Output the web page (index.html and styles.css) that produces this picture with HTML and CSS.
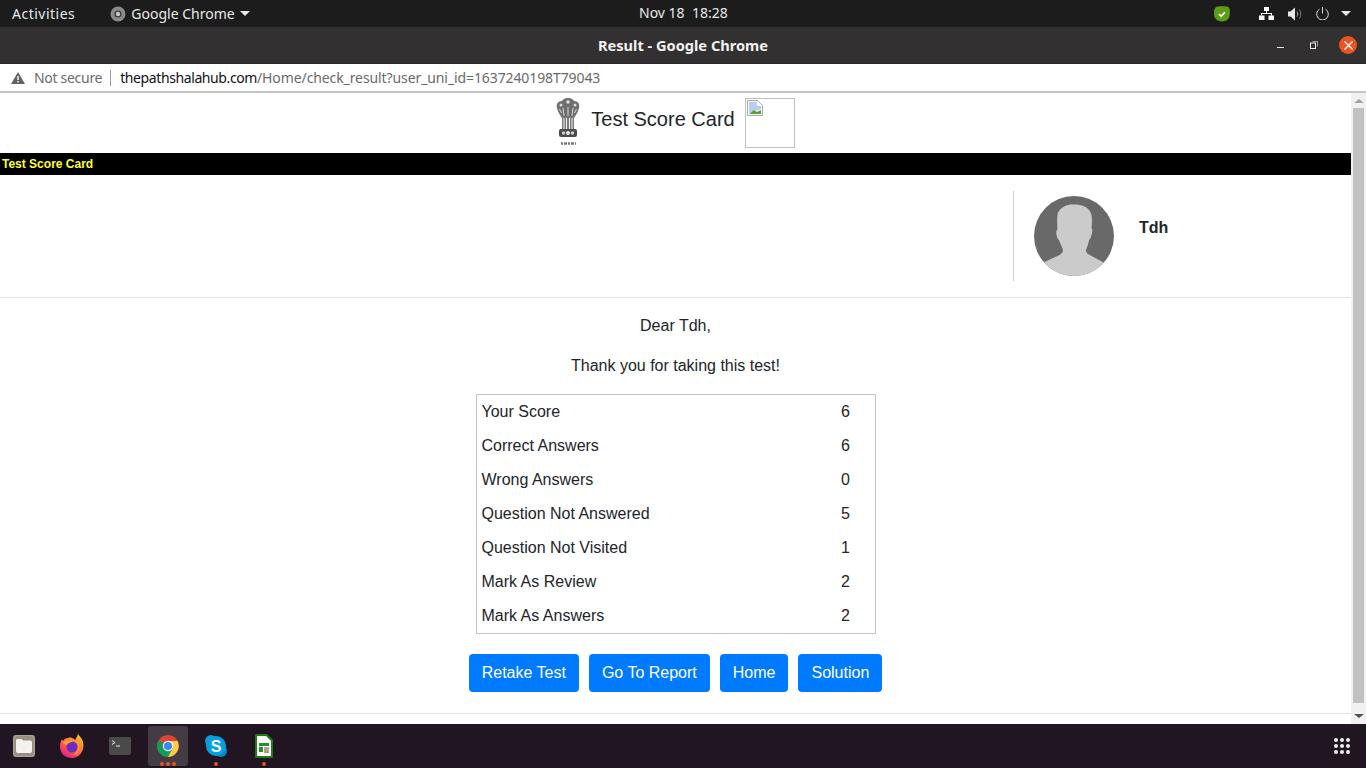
FILE: index.html
```html
<!DOCTYPE html>
<html lang="en">
<head>
    <meta charset="UTF-8">
    <meta name="viewport" content="width=device-width, initial-scale=1.0">
    <title>Result - Google Chrome</title>
    <link rel="stylesheet" href="styles.css">
</head>
<body>

    <div class="topbar">
        <div class="topbar-left">
            <span class="activities">Activities</span>
            <span class="app-menu">
                <svg class="app-icon" width="16" height="16" viewBox="0 0 16 16"><circle cx="8" cy="8" r="7.500" fill="#8b8b8b"/><circle cx="8" cy="8" r="3.600" fill="#3a3a3a"/><circle cx="8" cy="8" r="2.200" fill="#c8c8c8"/></svg>
                Google Chrome
                <span class="caret"></span>
            </span>
        </div>
        <div class="clock">Nov 18&nbsp; 18:28</div>
        <div class="tray">
            <svg class="tray-shield" width="16" height="16" viewBox="0 0 16 16"><path d="M3.500.500C6 0 11 0 13 .500c2 .5 2.700 2 2.800 4 .2 3 .1 6-1.300 8-1.300 2-4.500 3.300-7.200 3-2.500-.3-5-1.500-6.300-3.500C-.2 10 0 6.500.2 4.500.4 2.500 1.500 1 3.500.500z" fill="#5a9e16"/><path d="M5 8.200l2.200 2.100L11 6.200" fill="none" stroke="#fff" stroke-width="1.700"/></svg>
            <svg class="tray-net" width="15" height="13" viewBox="0 0 15 13" fill="#fff"><rect x="5" y="0" width="5" height="4"/><rect x="0" y="8.500" width="5.500" height="4.500"/><rect x="9.500" y="8.500" width="5.500" height="4.500"/><path d="M7 4h1v2h5v2.500h-1V7H3v1.500H2V6h5z"/></svg>
            <svg class="tray-vol" width="14" height="14" viewBox="0 0 14 14"><path d="M0 4.500h2.500L7 .5v13L2.500 9.500H0z" fill="#e8e8e8"/><path d="M9 4.500c1 1.500 1 3.500 0 5" fill="none" stroke="#aaa" stroke-width="1"/><path d="M11.500 2.500c1.700 2.700 1.700 6.300 0 9" fill="none" stroke="#777" stroke-width="1"/></svg>
            <svg class="tray-power" width="13" height="13" viewBox="0 0 13 13"><path d="M3.500 2.200a5.800 5.800 0 1 0 6 0" fill="none" stroke="#ddd" stroke-width="1"/><path d="M6.500 0v6.500" stroke="#ddd" stroke-width="1"/></svg>
            <span class="caret tray-caret"></span>
        </div>
    </div>

    <div class="titlebar">
        <span class="window-title">Result - Google Chrome</span>
        <div class="window-buttons">
            <span class="btn-min"></span>
            <svg class="btn-max" width="8" height="8" viewBox="0 0 8 8"><rect x=".5" y="2" width="5" height="5.500" fill="none" stroke="#f0f0f0" stroke-width="1"/><path d="M2.500.500h5V5.500" fill="none" stroke="#a0a0a0" stroke-width="1"/></svg>
            <span class="btn-close">
                <svg width="9" height="9" viewBox="0 0 9 9"><path d="M.5.500l8 8M8.500.500l-8 8" stroke="#fff" stroke-width="1.200"/></svg>
            </span>
        </div>
    </div>

    <div class="urlbar">
        <svg class="warn-icon" width="14" height="12" viewBox="0 0 14 12"><path d="M7 0l7 12H0z" fill="#5f6368"/><rect x="6.300" y="4" width="1.400" height="4" fill="#fff"/><rect x="6.300" y="9" width="1.400" height="1.500" fill="#fff"/></svg>
        <span class="not-secure">Not secure</span>
        <span class="url-sep"></span>
        <span class="url"><span class="url-host">thepathshalahub.com</span>/Home/check_result?user_uni_id=1637240198T79043</span>
    </div>

    <div class="viewport">
        <div class="page">
            <div class="brand">
                <svg class="emblem" width="24" height="50" viewBox="0 0 24 50">
                    <defs><filter id="soft"><feGaussianBlur stdDeviation="0.450"/></filter></defs>
                    <g filter="url(#soft)">
                        <path d="M1 10C0 6 2 3 6 3c1-2 3-3 6-3s5 1 6 3c4 0 6 3 5 7-1 4-3 7-5 10H6C4 17 2 14 1 10z" fill="#6e6e6e"/>
                        <circle cx="12" cy="4" r="1.800" fill="#dcdcdc"/>
                        <circle cx="5" cy="7" r="1.500" fill="#dcdcdc"/>
                        <circle cx="19" cy="7" r="1.500" fill="#dcdcdc"/>
                        <path d="M7 10l1 8M12 9v9M17 10l-1 8M3.500 11l2 4M20.500 11l-2 4" stroke="#d8d8d8" stroke-width="1"/>
                        <path d="M6 19h12v12H6z" fill="#7c7c7c"/>
                        <path d="M8 20v11M10.500 20v11M13.500 20v11M16 20v11" stroke="#ececec" stroke-width="1"/>
                        <rect x="3" y="31" width="18" height="8" rx="2" fill="#4c4c4c"/>
                        <circle cx="7.500" cy="35" r="1.700" fill="#d0d0d0"/>
                        <circle cx="12" cy="35" r="2.100" fill="#e4e4e4"/>
                        <circle cx="16.500" cy="35" r="1.700" fill="#d0d0d0"/>
                        <path d="M5 45.500h15" stroke="#777" stroke-width="2.500" stroke-dasharray="2 1 3 1"/>
                    </g>
                </svg>
                <h1 class="brand-title">Test Score Card</h1>
                <span class="broken-img">
                    <svg width="16" height="16" viewBox="0 0 16 16"><path d="M.5.500h10l5 5v10H.5z" fill="#fff" stroke="#a9a9a9"/><path d="M2 2h8v4h4v3l-4 2-2-1-6 3z" fill="#b7cdf2"/><path d="M2 14l5-4 3 2 4-2v4z" fill="#57a02c"/></svg>
                </span>
            </div>

            <div class="black-strip">Test Score Card</div>

            <div class="profile-row">
                <div class="profile">
                    <svg class="avatar" width="80" height="80" viewBox="0 0 80 80">
                        <defs><clipPath id="avatarClip"><circle cx="40" cy="40" r="40"/></clipPath></defs>
                        <circle cx="40" cy="40" r="40" fill="#696969"/>
                        <path clip-path="url(#avatarClip)" d="M24.500 16C27 11 33 8.500 38 8.500 46 8 54 10 57 17c1.500 5 1 10 .5 15 1 1 1 4 0 7-.5 3-2 4.500-2.500 5-.5 4-2 7-3 10 0 2 1 3.500 3 4.500l14.500 8L80 82H0l10.500-16 15-7c1.500-1 3.500-2.500 3.500-5-1-3-3-7-4-10-1.500-.5-2-3-2.500-5-.5-3 0-5 1-6-.5-5-.5-12 .5-17z" fill="#cbcbcb"/>
                    </svg>
                    <span class="profile-name">Tdh</span>
                </div>
            </div>

            <div class="result">
                <p class="dear">Dear Tdh,</p>
                <p class="thanks">Thank you for taking this test!</p>
                <table class="score-table">
                    <tr><td>Your Score</td><td>6</td></tr>
                    <tr><td>Correct Answers</td><td>6</td></tr>
                    <tr><td>Wrong Answers</td><td>0</td></tr>
                    <tr><td>Question Not Answered</td><td>5</td></tr>
                    <tr><td>Question Not Visited</td><td>1</td></tr>
                    <tr><td>Mark As Review</td><td>2</td></tr>
                    <tr><td>Mark As Answers</td><td>2</td></tr>
                </table>
                <div class="actions">
                    <a class="action" href="#">Retake Test</a>
                    <a class="action" href="#">Go To Report</a>
                    <a class="action" href="#">Home</a>
                    <a class="action" href="#">Solution</a>
                </div>
            </div>
            <div class="page-rule"></div>
        </div>
        <div class="scrollbar">
            <span class="arrow-up"></span>
            <span class="thumb"></span>
            <span class="arrow-down"></span>
        </div>
    </div>

    <div class="dock">
        <div class="dock-items">
            <span class="dock-item">
                <svg width="24" height="24" viewBox="0 0 24 24"><rect x="1" y="1" width="22" height="22" rx="3" fill="#979083"/><rect x="1.500" y="1.500" width="21" height="21" rx="3" fill="none" stroke="#aaa598"/><path d="M4 6.500a1.500 1.500 0 0 1 1.500-1.500h4l1.500 1.500h7.500A1.500 1.500 0 0 1 20 8v9a2 2 0 0 1-2 2H6a2 2 0 0 1-2-2z" fill="#f4f2ee"/></svg>
            </span>
            <span class="dock-item">
                <svg width="24" height="26" viewBox="0 0 24 26">
                    <defs><linearGradient id="foxGrad" x1="0.800" y1="0" x2="0.200" y2="1"><stop offset="0" stop-color="#ffc926"/><stop offset="0.500" stop-color="#ff7139"/><stop offset="1" stop-color="#e31587"/></linearGradient></defs>
                    <path d="M18 0c0 3 4 4 5 9 2 8-3 16-11 16S0 20 0 13c0-3 1-5 2-7l1 2c1-2 3-3 5-3 3-1 5 0 7 2 1-2 3-4 3-7z" fill="url(#foxGrad)"/>
                    <circle cx="12" cy="14" r="5.500" fill="#6c2bc4"/>
                    <path d="M3 9c3-2 7-2 10 0-3 0-5 1-6 3-2 0-3-1-4-3z" fill="#ff9b2e"/>
                    <path d="M16 7c3 2 4 6 3 10-1 3-3 5-6 5 3-2 5-4 5-8 0-3-1-5-2-7z" fill="#ff9b2e"/>
                </svg>
            </span>
            <span class="dock-item">
                <svg width="22" height="18" viewBox="0 0 22 18"><rect width="22" height="18" rx="2" fill="#4a4a4a"/><path d="M3 3.500l3 2-3 2" fill="none" stroke="#eee" stroke-width="1"/><path d="M7 9h4" stroke="#eee" stroke-width="1"/></svg>
            </span>
            <span class="dock-item dock-active">
                <svg width="24" height="24" viewBox="0 0 24 24">
                    <circle cx="12" cy="12" r="11" fill="#db4437"/>
                    <path d="M12 12L2.500 6.500A11 11 0 0 0 12 23l5.500-9.500z" fill="#0f9d58"/>
                    <path d="M12 7h9.500A11 11 0 0 1 12 23l5-9z" fill="#ffcd40"/>
                    <circle cx="12" cy="12" r="5.200" fill="#fff"/>
                    <circle cx="12" cy="12" r="4.100" fill="#4285f4"/>
                </svg>
                <span class="dots"><i></i><i></i><i></i></span>
            </span>
            <span class="dock-item">
                <svg width="24" height="24" viewBox="0 0 24 24"><circle cx="7" cy="7" r="6" fill="#0a9bd8"/><circle cx="17" cy="17" r="6" fill="#0a86c8"/><circle cx="12" cy="12" r="10" fill="#03a1e0"/><text x="12" y="17.500" class="skype-s">S</text></svg>
                <span class="dots"><i></i></span>
            </span>
            <span class="dock-item">
                <svg width="18" height="24" viewBox="0 0 18 24"><path d="M1 0h11l6 6v17a1 1 0 0 1-1 1H1a1 1 0 0 1-1-1V1a1 1 0 0 1 1-1z" fill="#1d7d14"/><path d="M2 2h9l5 5v15H2z" fill="#fff"/><path d="M4 9h10v3H4zM4 13h4v5H4z" fill="#2a8f22"/><rect x="9" y="13" width="5" height="6" fill="#a9a9a9"/><path d="M10.500 19v-4M12.500 19v-2" stroke="#e07b20" stroke-width="1"/></svg>
                <span class="dots"><i></i></span>
            </span>
        </div>
        <span class="app-grid">
            <i></i><i></i><i></i><i></i><i></i><i></i><i></i><i></i><i></i>
        </span>
    </div>

</body>
</html>
```

FILE: styles.css
```css
* {
    box-sizing: border-box;
}

html, body {
    height: 100%;
}

body {
    margin: 0;
    height: 768px;
    overflow: hidden;
    display: flex;
    flex-direction: column;
    font-family: 'Liberation Sans', Arial, sans-serif;
    color: #212529;
    background-color: #ffffff;
}

/* ubuntu desktop chrome */
.topbar {
    height: 27px;
    flex: none;
    display: flex;
    align-items: center;
    justify-content: space-between;
    position: relative;
    padding: 0 15px 0 12px;
    background-color: #1c1c1c;
    color: #e8e8e8;
    font-family: 'Noto Sans', sans-serif;
    font-size: 14px;
}

.topbar-left {
    display: flex;
    align-items: center;
}

.activities {
    letter-spacing: 0.5px;
}

.app-menu {
    display: flex;
    align-items: center;
    margin-left: 35px;
}

.app-icon {
    margin-right: 5px;
}

.caret {
    display: inline-block;
    margin-left: 5px;
    border-left: 5px solid transparent;
    border-right: 5px solid transparent;
    border-top: 5px solid #e8e8e8;
}

.clock {
    position: absolute;
    left: 639px;
    top: 3px;
    font-size: 14px;
}

.tray {
    display: flex;
    align-items: center;
}

.tray-net {
    margin-left: 29px;
}

.tray-vol {
    margin-left: 14px;
}

.tray-power {
    margin-left: 14px;
}

.tray-caret {
    margin-left: 12px;
}

.titlebar {
    height: 37px;
    flex: none;
    display: flex;
    align-items: center;
    justify-content: center;
    position: relative;
    background-color: #323030;
    border-bottom: 1px solid #2a2a2a;
}

.window-title {
    color: #f2f2f2;
    font-family: 'Noto Sans', sans-serif;
    font-weight: 700;
    font-size: 14.600px;
}

.window-buttons {
    position: absolute;
    right: 9px;
    top: 9px;
    display: flex;
    align-items: center;
}

.btn-min {
    width: 7px;
    height: 1px;
    margin-top: 4px;
    background-color: #e8e8e8;
}

.btn-max {
    margin-left: 26px;
    margin-top: -1px;
}

.btn-close {
    width: 18px;
    height: 18px;
    margin-left: 21px;
    display: flex;
    align-items: center;
    justify-content: center;
    border-radius: 50%;
    background-color: #e95420;
}

.urlbar {
    height: 29px;
    flex: none;
    display: flex;
    align-items: center;
    padding-left: 11px;
    background-color: #ffffff;
    border-bottom: 2px solid #c4c4c4;
    font-family: 'Noto Sans', sans-serif;
    font-size: 14px;
    color: #6a6a6a;
}

.not-secure {
    margin-left: 9px;
    letter-spacing: -0.3px;
}

.url-sep {
    width: 1px;
    height: 16px;
    margin: 0 9px 0 8px;
    background-color: #9a9a9a;
}

.url {
    letter-spacing: -0.1px;
}

.url-host {
    color: #111111;
    letter-spacing: -0.4px;
}

/* page area */
.viewport {
    flex: 1;
    min-height: 0;
    display: flex;
}

.page {
    flex: 1;
    min-width: 0;
}

.brand {
    height: 60px;
    display: flex;
    align-items: center;
    justify-content: center;
}

.emblem {
    margin-right: 11px;
}

.brand-title {
    margin: 0 10px 0 0;
    font-size: 20px;
    font-weight: 400;
    position: relative;
    top: -4px;
}

.broken-img {
    width: 50px;
    height: 50px;
    display: block;
    padding: 1px 0 0 1px;
    border: 1px solid #c0c0c0;
}

.black-strip {
    height: 22px;
    line-height: 22px;
    padding-left: 2px;
    background-color: #000000;
    color: #ffff33;
    font-size: 12px;
    font-weight: 700;
}

.profile-row {
    height: 123px;
    padding-top: 16px;
    border-bottom: 1px solid #e4e4e4;
}

.profile {
    width: 338px;
    height: 90px;
    margin-left: auto;
    display: flex;
    padding: 5px 0 0 20px;
    border-left: 1px solid #cccccc;
}

.profile-name {
    margin: 23px 0 0 25px;
    font-size: 16px;
    font-weight: 700;
}

.result {
    display: flex;
    flex-direction: column;
    align-items: center;
    font-size: 16px;
}

.dear {
    margin: 18px 0 0;
    line-height: 20px;
}

.thanks {
    margin: 20px 0 0;
    line-height: 20px;
}

.score-table {
    width: 400px;
    height: 240px;
    margin-top: 18px;
    padding: 0;
    border: 1px solid #c4c4c4;
    border-collapse: separate;
    border-spacing: 0;
}

.score-table td {
    height: 34px;
    padding: 0 0 0 5px;
}

.score-table td:last-child {
    width: 33.500px;
    padding: 0;
}

.actions {
    display: flex;
    gap: 10px;
    margin-top: 20px;
}

.action {
    height: 38px;
    line-height: 38px;
    padding: 0 13px;
    border-radius: 4px;
    background-color: #007bff;
    color: #ffffff;
    text-decoration: none;
}

.page-rule {
    height: 1px;
    margin-top: 21px;
    background-color: #e4e4e4;
}

.scrollbar {
    width: 15px;
    flex: none;
    display: flex;
    flex-direction: column;
    align-items: center;
    background-color: #f1f1f1;
}

.arrow-up {
    margin-top: 6px;
    border-left: 5px solid transparent;
    border-right: 5px solid transparent;
    border-bottom: 4px solid #a3a3a3;
}

.thumb {
    flex: 1;
    width: 11px;
    margin: 5px 0 11px;
    background-color: #c1c1c1;
}

.arrow-down {
    margin-bottom: 6px;
    border-left: 5px solid transparent;
    border-right: 5px solid transparent;
    border-top: 4px solid #505050;
}

/* launcher */
.dock {
    height: 44px;
    flex: none;
    display: flex;
    align-items: center;
    justify-content: space-between;
    padding: 0 16px 0 0;
    background-color: #201520;
}

.dock-items {
    display: flex;
    height: 44px;
}

.dock-item {
    width: 48px;
    height: 40px;
    margin-top: 2px;
    display: flex;
    align-items: center;
    justify-content: center;
    position: relative;
}

.dock-active {
    width: 40px;
    margin: 2px 4px 0;
    border-radius: 3px;
    background-color: #443c44;
}

.dots {
    position: absolute;
    left: 0;
    right: 0;
    bottom: 0;
    display: flex;
    justify-content: center;
    gap: 2px;
}

.dots i {
    width: 4px;
    height: 4px;
    border-radius: 50%;
    background-color: #e95420;
}

.skype-s {
    fill: #ffffff;
    font-family: 'Liberation Sans', sans-serif;
    font-size: 16px;
    font-weight: 700;
    text-anchor: middle;
}

.app-grid {
    display: grid;
    grid-template-columns: repeat(3, 4px);
    gap: 2px;
}

.app-grid i {
    width: 4px;
    height: 4px;
    border-radius: 50%;
    background-color: #eeeeee;
}
```
